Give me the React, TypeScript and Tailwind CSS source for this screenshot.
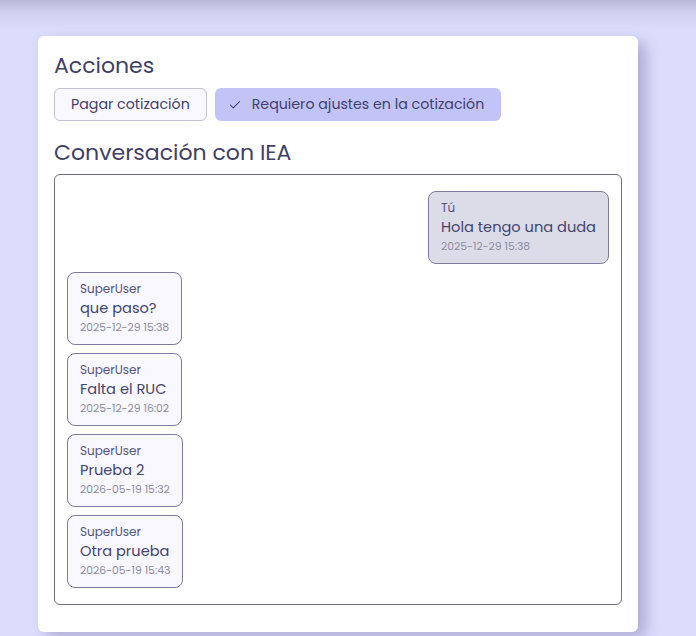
import React from "react";
import { Check } from "lucide-react";

const font = { fontFamily: "Poppins, Inter, 'Noto Sans', sans-serif" };

type Msg = { who: string; text: string; date: string; mine?: boolean };

const msgs: Msg[] = [
  { who: "Tú", text: "Hola tengo una duda", date: "2025-12-29 15:38", mine: true },
  { who: "SuperUser", text: "que paso?", date: "2025-12-29 15:38" },
  { who: "SuperUser", text: "Falta el RUC", date: "2025-12-29 16:02" },
  { who: "SuperUser", text: "Prueba 2", date: "2026-05-19 15:32" },
  { who: "SuperUser", text: "Otra prueba", date: "2026-05-19 15:43" },
];

function Bubble({ m }: { m: Msg }) {
  return (
    <div
      className={
        "flex flex-col rounded-[8px] border px-3 py-2 " +
        (m.mine
          ? "self-end border-[#7c7c9c] bg-[#dcdce8]"
          : "self-start border-[#7c7c9c] bg-[#f9f7ff]")
      }
    >
      <div className="text-[12px] leading-[16px] text-[#55557a]">{m.who}</div>
      <div className="text-[14.6px] leading-[22px] text-[#44446c]">{m.text}</div>
      <div className="text-[10.8px] leading-[17px] text-[#8c8ca0]">{m.date}</div>
    </div>
  );
}

export default function App() {
  return (
    <div
      style={font}
      className="min-h-screen w-full bg-[linear-gradient(to_bottom,#b8b8d8_0px,#cfcff0_12px,#dcdcfc_30px)] pl-[38px] pt-[36px]"
    >
      <div className="flex w-[600px] flex-col rounded-[6px] bg-white px-4 pb-[27px] pt-[14px] shadow-[8px_6px_14px_rgba(90,90,150,0.35)]">
        <h2 className="text-[22px] leading-[32px] text-[#3f3f68]">Acciones</h2>
        <div className="mt-[6px] flex gap-2">
          <button className="h-[33px] rounded-[6px] border border-[#c4c0d4] bg-[#faf8ff] px-4 text-[14.2px] text-[#3f3f68]">
            Pagar cotización
          </button>
          <button className="flex h-[33px] items-center rounded-[6px] border border-transparent bg-[#c2c4f8] px-4 text-[14.2px] text-[#3f3f68]">
            <span className="-ml-1 mr-2 flex w-4 items-center">
              <Check size={14} strokeWidth={1.8} />
            </span>
            Requiero ajustes en la cotización
          </button>
        </div>
        <h2 className="mt-[16px] text-[22px] leading-[32px] text-[#3f3f68]">
          Conversación con IEA
        </h2>
        <div className="mt-[5px] flex h-[431px] flex-col gap-2 rounded-[6px] border border-[#6e6e82] px-3 py-4">
          {msgs.map((m, i) => (
            <Bubble key={i} m={m} />
          ))}
        </div>
      </div>
    </div>
  );
}
